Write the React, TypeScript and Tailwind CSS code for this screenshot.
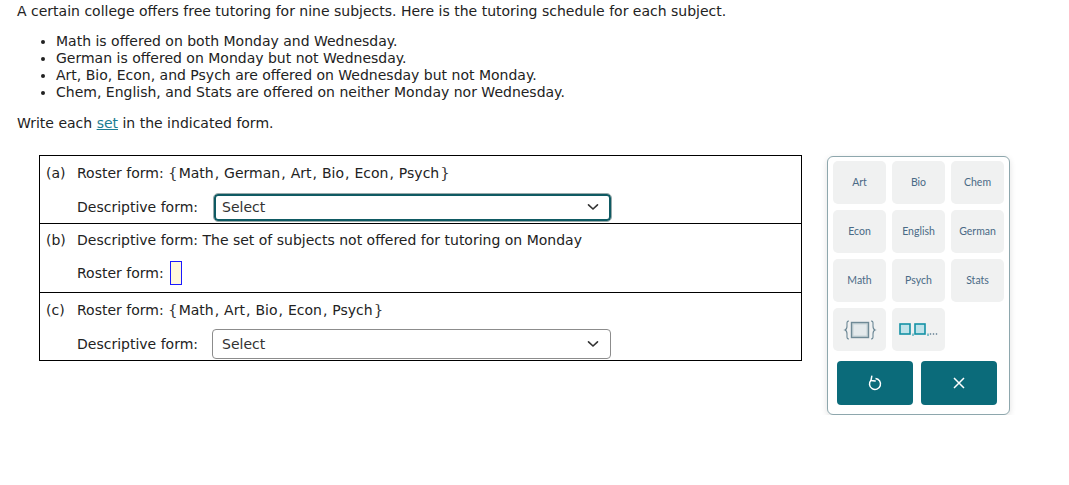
import React from 'react';

const textFont = "font-['DejaVu_Sans',Verdana,sans-serif]";
const padFont = "font-['Lato','Open_Sans',sans-serif]";

function Chevron() {
  return (
    <svg width="12" height="8" viewBox="0 0 12 8" className="shrink-0">
      <path d="M1.5 1.8 L6 6 L10.5 1.8" fill="none" stroke="#333" strokeWidth="1.6" strokeLinecap="round" />
    </svg>
  );
}

function SelectBox({ focused }: { focused?: boolean }) {
  return (
    <div
      className={
        focused
          ? 'flex items-center justify-between w-[397px] h-[27px] rounded-[4px] border-2 border-[#0f5a63] outline outline-1 outline-[#9aa] pl-[6px] pr-[10px]'
          : 'flex items-center justify-between w-[399px] h-[30px] rounded-[4px] border border-[#8c8c8c] pl-[9px] pr-[11px]'
      }
    >
      <span className="text-[#333] text-[14px]">Select</span>
      <Chevron />
    </div>
  );
}

function Roster({ items }: { items: string[] }) {
  return (
    <span className="inline-flex items-baseline">
      <span className="font-['DejaVu_Serif',serif] text-[15px] text-[#333] mr-[1px] font-light">{'{'}</span>
      {items.map((it, i) => (
        <span key={it}>
          {it}
          {i < items.length - 1 && <span className="ml-[1px] mr-[5px]">,</span>}
        </span>
      ))}
      <span className="font-['DejaVu_Serif',serif] text-[15px] text-[#333] ml-[1px] font-light">{'}'}</span>
    </span>
  );
}

function Key({ children }: { children: React.ReactNode }) {
  return (
    <div className="h-[43px] rounded-[5px] bg-[#f0f1f1] flex items-center justify-center text-[10.5px] text-[#4a6a86]">
      {children}
    </div>
  );
}

export default function App() {
  const subjects = ['Art', 'Bio', 'Chem', 'Econ', 'English', 'German', 'Math', 'Psych', 'Stats'];

  return (
    <div className={`${textFont} text-[14px] leading-[17px] text-[#222] pt-[3px] pl-[17px]`}>
      <p>A certain college offers free tutoring for nine subjects. Here is the tutoring schedule for each subject.</p>
      <ul className="list-disc pl-[39px] mt-[13px]">
        <li>Math is offered on both Monday and Wednesday.</li>
        <li>German is offered on Monday but not Wednesday.</li>
        <li>Art, Bio, Econ, and Psych are offered on Wednesday but not Monday.</li>
        <li>Chem, English, and Stats are offered on neither Monday nor Wednesday.</li>
      </ul>
      <p className="mt-[14px]">
        Write each <span className="text-[#1b7c93] underline">set</span> in the indicated form.
      </p>

      <div className="flex items-start mt-[23px] ml-[22px]">
        <div className="w-[763px] border border-black">
          {/* (a) */}
          <div className="h-[68px] border-b border-black flex flex-col">
            <div className="h-[35px] flex items-center pl-[6px]">
              <span className="w-[31px]">(a)</span>
              <span>Roster form:&nbsp;</span>
              <Roster items={['Math', 'German', 'Art', 'Bio', 'Econ', 'Psych']} />
            </div>
            <div className="h-[32px] flex items-center pl-[37px]">
              <span className="w-[137px]">Descriptive form:</span>
              <SelectBox focused />
            </div>
          </div>
          {/* (b) */}
          <div className="h-[69px] border-b border-black flex flex-col">
            <div className="h-[33px] flex items-center pl-[6px]">
              <span className="w-[31px]">(b)</span>
              <span>Descriptive form: The set of subjects not offered for tutoring on Monday</span>
            </div>
            <div className="h-[32px] flex items-center pl-[37px]">
              <span>Roster form:</span>
              <span className="ml-[6px] w-[12px] h-[24px] border border-[#1a1aff] bg-[#fff8dc]" />
            </div>
          </div>
          {/* (c) */}
          <div className="h-[67px] flex flex-col">
            <div className="h-[35px] flex items-center pl-[6px]">
              <span className="w-[31px]">(c)</span>
              <span>Roster form:&nbsp;</span>
              <Roster items={['Math', 'Art', 'Bio', 'Econ', 'Psych']} />
            </div>
            <div className="h-[32px] flex items-center pl-[37px]">
              <span className="w-[135px]">Descriptive form:</span>
              <SelectBox />
            </div>
          </div>
        </div>

        {/* keypad */}
        <div
          className={`${padFont} ml-[25px] mt-[1px] w-[183px] rounded-[6px] border border-[#8ea7ad] bg-white shadow-[0_2px_6px_rgba(0,0,0,0.12)] pt-[4px] px-[5px] pb-[9px]`}
        >
          <div className="grid grid-cols-3 gap-x-[6px] gap-y-[6px]">
            {subjects.map((s) => (
              <Key key={s}>{s}</Key>
            ))}
            <Key>
              <svg width="34" height="22" viewBox="0 0 34 22">
                <path d="M6 2 C3.5 2 4 4 4 7 C4 9.5 3.5 10.5 2 11 C3.5 11.5 4 12.5 4 15 C4 18 3.5 20 6 20" fill="none" stroke="#6a8694" strokeWidth="1.1" />
                <path d="M28 2 C30.5 2 30 4 30 7 C30 9.5 30.5 10.5 32 11 C30.5 11.5 30 12.5 30 15 C30 18 30.5 20 28 20" fill="none" stroke="#6a8694" strokeWidth="1.1" />
                <rect x="8.5" y="3.5" width="17" height="15" fill="#c9d5d9" stroke="#6f8a96" strokeWidth="1.4" />
                <rect x="10.5" y="5.5" width="13" height="11" fill="#e4eaec" />
              </svg>
            </Key>
            <Key>
              <svg width="40" height="16" viewBox="0 0 40 16">
                <rect x="1" y="2" width="10" height="10" fill="#bfe3ea" stroke="#1592a6" strokeWidth="1.6" />
                <rect x="13.5" y="11.5" width="1" height="2.5" fill="#1592a6" />
                <rect x="16" y="2" width="10" height="10" fill="#bfe3ea" stroke="#1592a6" strokeWidth="1.6" />
                <rect x="28.5" y="11.5" width="1" height="2.5" fill="#1592a6" />
                <circle cx="31.5" cy="12" r="0.8" fill="#4d6d84" />
                <circle cx="34.5" cy="12" r="0.8" fill="#4d6d84" />
                <circle cx="37.5" cy="12" r="0.8" fill="#4d6d84" />
              </svg>
            </Key>
          </div>
          <div className="flex gap-[8px] mt-[10px] pl-[4px]">
            <button className="w-[76px] h-[44px] rounded-[4px] bg-[#0b6b7a] flex items-center justify-center">
              <svg width="14" height="16" viewBox="0 0 14 16">
                <path d="M3 5.2 A5.5 5.5 0 1 0 7.5 3.5" fill="none" stroke="#fff" strokeWidth="1.5" />
                <path d="M3.8 1.2 L3 5.4 L7.2 6" fill="none" stroke="#fff" strokeWidth="1.5" strokeLinejoin="round" strokeLinecap="round" />
              </svg>
            </button>
            <button className="w-[76px] h-[44px] rounded-[4px] bg-[#0b6b7a] flex items-center justify-center">
              <svg width="12" height="12" viewBox="0 0 12 12">
                <path d="M1 1 L11 11 M11 1 L1 11" stroke="#fff" strokeWidth="1.5" />
              </svg>
            </button>
          </div>
        </div>
      </div>
    </div>
  );
}
